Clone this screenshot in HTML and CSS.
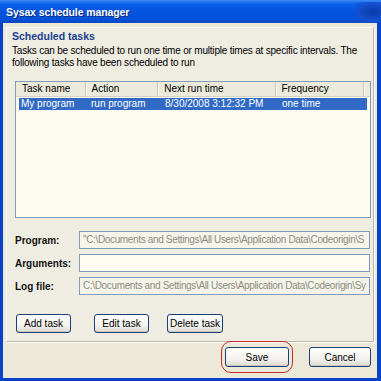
FILE: index.html
```html
<!DOCTYPE html>
<html>
<head>
<meta charset="utf-8">
<link rel="stylesheet" href="styles.css">
</head>
<body>
<div class="window">
  <div class="titlebar">
    <span class="title">Sysax schedule manager</span>
    <span class="closebtn"></span>
  </div>
  <div class="client">
    <div class="panel">
      <div class="heading">Scheduled tasks</div>
      <div class="desc">Tasks can be scheduled to run one time or multiple times at specific intervals. The following tasks have been scheduled to run</div>
      <div class="list">
        <div class="lhead">
          <div class="col c1">Task name</div>
          <div class="col c2">Action</div>
          <div class="col c3">Next run time</div>
          <div class="col c4">Frequency</div>
          <div class="col c5"></div>
        </div>
        <div class="lrow sel">
          <div class="cell c1">My program</div>
          <div class="cell c2">run program</div>
          <div class="cell c3">8/30/2008 3:12:32 PM</div>
          <div class="cell c4">one time</div>
        </div>
      </div>
      <div class="form">
        <label class="lbl">Program:</label>
        <div class="input dis">"C:\Documents and Settings\All Users\Application Data\Codeorigin\S</div>
        <label class="lbl">Arguments:</label>
        <div class="input"></div>
        <label class="lbl">Log file:</label>
        <div class="input dis">C:\Documents and Settings\All Users\Application Data\Codeorigin\Sy</div>
      </div>
      <div class="taskbtns">
        <button class="btn b-add">Add task</button>
        <button class="btn b-edit">Edit task</button>
        <button class="btn b-del">Delete task</button>
      </div>
    </div>
    <div class="footer">
      <div class="savewrap">
        <button class="btn b-save">Save</button>
        <span class="ring"></span>
      </div>
      <button class="btn b-cancel">Cancel</button>
    </div>
  </div>
</div>
</body>
</html>
```
FILE: styles.css
```css
* { box-sizing: border-box; }
html, body { margin: 0; padding: 0; background: #fff; }
body { font-family: "Liberation Sans", Arial, sans-serif; font-size: 10px; color: #000; letter-spacing: -0.2px; }

.window {
  width: 381px; height: 381px;
  background: #0842c8;
  padding: 0 4px 3px 3px;
  display: flex; flex-direction: column;
  overflow: hidden;
}
.titlebar {
  height: 23px; margin: 0 -4px 0 -3px;
  background: linear-gradient(#3b8af4 0%, #0a5fe8 18%, #0454e0 50%, #0450d8 85%, #0a47c0 100%);
  display: flex; align-items: center; padding-left: 6px; position: relative;
}
.title { color: #fff; font-weight: bold; font-size: 10.5px; text-shadow: 1px 1px 0 #0a2a80; letter-spacing: -0.1px; }
.closebtn {
  position: absolute; right: 0; top: 2px; width: 26px; height: 20px;
  background: radial-gradient(ellipse at 70% 50%, #0b3aa8 0%, #1450d0 60%, transparent 100%);
}
.client {
  flex: 1; background: #ece9d8;
  padding: 4px 3px 0 3px;
  display: flex; flex-direction: column;
}
.panel {
  height: 315px;
  background: #efede2;
  border-left: 1px solid #fbfbf8;
  border-top: 1px solid #fbfbf8;
  border-right: 1px solid #b9b7ad;
  border-bottom: 1px solid #b9b7ad;
  box-shadow: 1px 1px 0 #fdfdfb;
  padding: 2px 6px 0 5px;
}
.heading { color: #1b3f8f; font-weight: bold; font-size: 10.5px; line-height: 13px; letter-spacing: 0; }
.desc { font-size: 10px; line-height: 12px; margin-top: 2px; width: 352px; }
.list {
  margin: 12px 0 0 3px; width: 356px; height: 137px;
  background: #fefcf1;
  border: 1px solid #7f9db9;
}
.lhead {
  display: flex; height: 15px;
  background: #ebeadb;
  border-bottom: 1px solid #d6d2c2;
}
.col { font-size: 10px; line-height: 14px; padding-left: 6px; border-right: 1px solid #c8c5b5; box-shadow: 1px 0 0 #fff; letter-spacing: 0; }
.lhead .c1 { width: 70px; }
.lhead .c2 { width: 73px; }
.lhead .c3 { width: 118px; }
.lhead .c4 { width: 89px; }
.lhead .c5 { flex: 1; border-right: none; box-shadow: none; }
.lrow { display: flex; height: 12px; margin: 1px 0 0 3px; width: 348px; }
.lrow.sel { background: #316ac5; color: #fff; }
.cell { font-size: 10px; line-height: 12px; padding-left: 2px; white-space: nowrap; letter-spacing: 0; }
.lrow .c1 { width: 70px; }
.lrow .c2 { width: 74px; }
.lrow .c3 { width: 117px; }
.lrow .c4 { width: 80px; }

.form {
  margin-top: 13px;
  display: grid; grid-template-columns: 64px 291px;
  row-gap: 5px; align-items: center;
  margin-left: 3px;
}
.lbl { font-weight: bold; font-size: 10px; color: #111; letter-spacing: 0; }
.input {
  height: 18px; border: 1px solid #7f9db9; background: #fefcf3;
  font-size: 10px; line-height: 16px; padding-left: 3px;
  white-space: nowrap; overflow: hidden; letter-spacing: -0.35px;
}
.input.dis { background: #f6f4ea; color: #8c8c84; }

.taskbtns { display: flex; margin: 19px 0 0 4px; }
.btn {
  font-family: "Liberation Sans", Arial, sans-serif; font-size: 10px;
  height: 19px; padding: 0;
  border: 1px solid #1c3f7a; border-radius: 3px;
  background: linear-gradient(#fefefd 0%, #f4f3ee 60%, #dcdad0 100%);
  box-shadow: inset 0 -1px 0 #cdcabd;
  color: #000;
}
.b-add { width: 55px; }
.b-edit { width: 55px; margin-left: 23px; }
.b-del { width: 56px; margin-left: 18px; }

.footer { display: flex; justify-content: flex-end; align-items: center; padding: 5px 3px 0 0; }
.savewrap { position: relative; }
.b-save { width: 64px; height: 20px; }
.b-cancel { width: 62px; height: 20px; margin-left: 20px; }
.ring {
  position: absolute; left: -4px; top: -6px; width: 72px; height: 32px;
  border: 1px solid #c42a2a; border-radius: 10px;
}
```
